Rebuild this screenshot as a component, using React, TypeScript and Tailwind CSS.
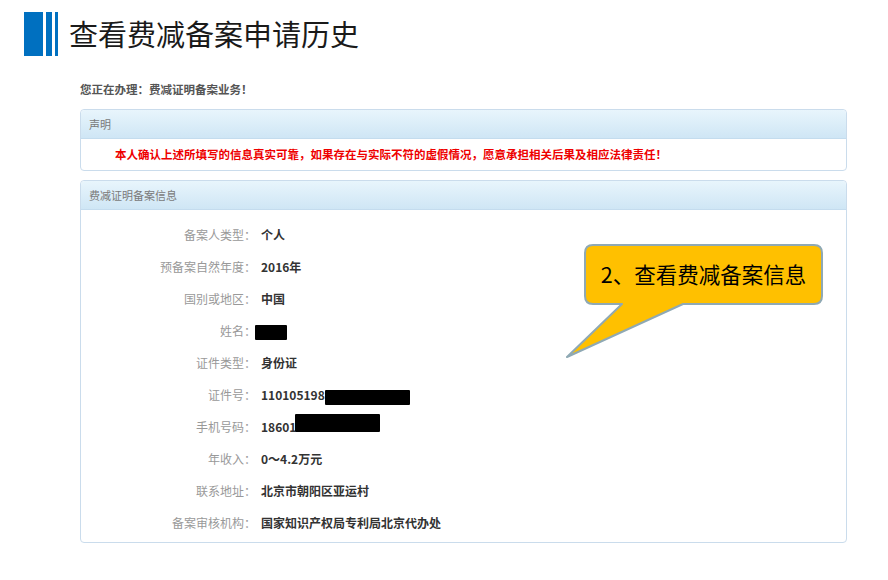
const font = { fontFamily: '"Noto Sans CJK SC", "Noto Sans", sans-serif' };

const rows: { label: string; value: string }[] = [
  { label: '备案人类型', value: '个人' },
  { label: '预备案自然年度', value: '2016年' },
  { label: '国别或地区', value: '中国' },
  { label: '姓名', value: '' },
  { label: '证件类型', value: '身份证' },
  { label: '证件号', value: '110105198' },
  { label: '手机号码', value: '18601' },
  { label: '年收入', value: '0～4.2万元' },
  { label: '联系地址', value: '北京市朝阳区亚运村' },
  { label: '备案审核机构', value: '国家知识产权局专利局北京代办处' },
];

function PanelHeader({ title }: { title: string }) {
  return (
    <div className="h-[29px] flex items-center px-[8px] bg-gradient-to-b from-[#e8f5fc] to-[#cfe6f5] rounded-t-[4px] border-b border-[#c4dcee]">
      <span className="text-[11px] text-[#7a7a7a]">{title}</span>
    </div>
  );
}

function Callout() {
  return (
    <div className="absolute left-[560px] top-[240px] w-[270px] h-[125px]">
      <svg width="270" height="125" viewBox="0 0 270 125" className="absolute inset-0">
        <path
          d="M33,5 H254 Q262,5 262,13 V56 Q262,64 254,64 H123 L7,117 L62,64 H33 Q25,64 25,56 V13 Q25,5 33,5 Z"
          fill="#FFC000"
          stroke="#8FA9B4"
          strokeWidth="2"
          strokeLinejoin="round"
        />
      </svg>
      <div className="absolute left-[25px] top-[5px] w-[237px] h-[59px] flex items-center justify-center text-[21.5px] text-black">
        2、查看费减备案信息
      </div>
    </div>
  );
}

export default function App() {
  return (
    <div className="relative w-[888px] h-[580px] bg-white overflow-hidden" style={font}>
      {/* title */}
      <div className="flex items-center pt-[12px] pl-[24px] h-[56px]">
        <div className="flex h-[44px] gap-[3px]">
          <div className="w-[19px] bg-[#0070C0]" />
          <div className="w-[6px] bg-[#0070C0]" />
          <div className="w-[3px] bg-[#0070C0]" />
        </div>
        <h1 className="ml-[11px] text-[29px] leading-none text-[#1a1a1a] -mt-[1px]">查看费减备案申请历史</h1>
      </div>

      <div className="ml-[80px] w-[767px]">
        <div className="mt-[26px] text-[11.5px] font-bold text-[#555] leading-[14px]">您正在办理：费减证明备案业务！</div>

        <div className="mt-[13px] border border-[#cadcec] rounded-[4px]">
          <PanelHeader title="声明" />
          <div className="h-[31px] flex items-center pl-[34px]">
            <span className="text-[11.5px] font-bold text-[#ee0000]">
              本人确认上述所填写的信息真实可靠，如果存在与实际不符的虚假情况，愿意承担相关后果及相应法律责任！
            </span>
          </div>
        </div>

        <div className="mt-[9px] border border-[#cadcec] rounded-[4px]">
          <PanelHeader title="费减证明备案信息" />
          <div className="pt-[9px] pb-[3px]">
            {rows.map((r) => (
              <div key={r.label} className="h-[32px] flex items-center">
                <div className="w-[175px] text-right text-[12px] text-[#999]">{r.label}：</div>
                <div className="ml-[5px] flex items-center text-[12px] font-bold text-[#333]">
                  {r.label === '姓名' && <span className="-ml-[6px] relative top-[1px] inline-block w-[32px] h-[15px] bg-black rounded-[1px]" />}
                  {r.value}
                  {r.label === '证件号' && <span className="relative top-[2px] inline-block w-[85px] h-[15px] bg-black rounded-[1px]" />}
                  {r.label === '手机号码' && <span className="-ml-[1px] relative -top-[4px] inline-block w-[85px] h-[18px] bg-black rounded-[1px]" />}
                </div>
              </div>
            ))}
          </div>
        </div>
      </div>

      <Callout />
    </div>
  );
}
